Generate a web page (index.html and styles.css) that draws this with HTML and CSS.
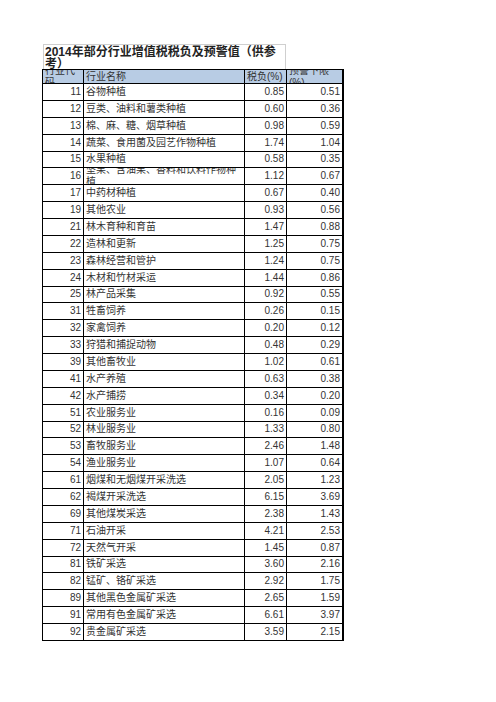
FILE: index.html
```html
<!DOCTYPE html>
<html lang="zh">
<head>
<meta charset="utf-8">
<title>2014年部分行业增值税税负及预警值</title>
<link rel="stylesheet" href="styles.css">
</head>
<body>
<div class="sheet">
  <div class="title">2014年部分行业增值税税负及预警值（供参<br>考）</div>
  <div class="grid">
    <div class="cell head">行业代码</div>
    <div class="cell head">行业名称</div>
    <div class="cell head">税负(%)</div>
    <div class="cell head last">预警下限(%)</div>

    <div class="cell num">11</div><div class="cell">谷物种植</div><div class="cell num">0.85</div><div class="cell num last">0.51</div>
    <div class="cell num">12</div><div class="cell">豆类、油料和薯类种植</div><div class="cell num">0.60</div><div class="cell num last">0.36</div>
    <div class="cell num">13</div><div class="cell">棉、麻、糖、烟草种植</div><div class="cell num">0.98</div><div class="cell num last">0.59</div>
    <div class="cell num">14</div><div class="cell">蔬菜、食用菌及园艺作物种植</div><div class="cell num">1.74</div><div class="cell num last">1.04</div>
    <div class="cell num">15</div><div class="cell">水果种植</div><div class="cell num">0.58</div><div class="cell num last">0.35</div>
    <div class="cell num">16</div><div class="cell">坚果、含油果、香料和饮料作物种植</div><div class="cell num">1.12</div><div class="cell num last">0.67</div>
    <div class="cell num">17</div><div class="cell">中药材种植</div><div class="cell num">0.67</div><div class="cell num last">0.40</div>
    <div class="cell num">19</div><div class="cell">其他农业</div><div class="cell num">0.93</div><div class="cell num last">0.56</div>
    <div class="cell num">21</div><div class="cell">林木育种和育苗</div><div class="cell num">1.47</div><div class="cell num last">0.88</div>
    <div class="cell num">22</div><div class="cell">造林和更新</div><div class="cell num">1.25</div><div class="cell num last">0.75</div>
    <div class="cell num">23</div><div class="cell">森林经营和管护</div><div class="cell num">1.24</div><div class="cell num last">0.75</div>
    <div class="cell num">24</div><div class="cell">木材和竹材采运</div><div class="cell num">1.44</div><div class="cell num last">0.86</div>
    <div class="cell num">25</div><div class="cell">林产品采集</div><div class="cell num">0.92</div><div class="cell num last">0.55</div>
    <div class="cell num">31</div><div class="cell">牲畜饲养</div><div class="cell num">0.26</div><div class="cell num last">0.15</div>
    <div class="cell num">32</div><div class="cell">家禽饲养</div><div class="cell num">0.20</div><div class="cell num last">0.12</div>
    <div class="cell num">33</div><div class="cell">狩猎和捕捉动物</div><div class="cell num">0.48</div><div class="cell num last">0.29</div>
    <div class="cell num">39</div><div class="cell">其他畜牧业</div><div class="cell num">1.02</div><div class="cell num last">0.61</div>
    <div class="cell num">41</div><div class="cell">水产养殖</div><div class="cell num">0.63</div><div class="cell num last">0.38</div>
    <div class="cell num">42</div><div class="cell">水产捕捞</div><div class="cell num">0.34</div><div class="cell num last">0.20</div>
    <div class="cell num">51</div><div class="cell">农业服务业</div><div class="cell num">0.16</div><div class="cell num last">0.09</div>
    <div class="cell num">52</div><div class="cell">林业服务业</div><div class="cell num">1.33</div><div class="cell num last">0.80</div>
    <div class="cell num">53</div><div class="cell">畜牧服务业</div><div class="cell num">2.46</div><div class="cell num last">1.48</div>
    <div class="cell num">54</div><div class="cell">渔业服务业</div><div class="cell num">1.07</div><div class="cell num last">0.64</div>
    <div class="cell num">61</div><div class="cell">烟煤和无烟煤开采洗选</div><div class="cell num">2.05</div><div class="cell num last">1.23</div>
    <div class="cell num">62</div><div class="cell">褐煤开采洗选</div><div class="cell num">6.15</div><div class="cell num last">3.69</div>
    <div class="cell num">69</div><div class="cell">其他煤炭采选</div><div class="cell num">2.38</div><div class="cell num last">1.43</div>
    <div class="cell num">71</div><div class="cell">石油开采</div><div class="cell num">4.21</div><div class="cell num last">2.53</div>
    <div class="cell num">72</div><div class="cell">天然气开采</div><div class="cell num">1.45</div><div class="cell num last">0.87</div>
    <div class="cell num">81</div><div class="cell">铁矿采选</div><div class="cell num">3.60</div><div class="cell num last">2.16</div>
    <div class="cell num">82</div><div class="cell">锰矿、铬矿采选</div><div class="cell num">2.92</div><div class="cell num last">1.75</div>
    <div class="cell num">89</div><div class="cell">其他黑色金属矿采选</div><div class="cell num">2.65</div><div class="cell num last">1.59</div>
    <div class="cell num">91</div><div class="cell">常用有色金属矿采选</div><div class="cell num">6.61</div><div class="cell num last">3.97</div>
    <div class="cell num">92</div><div class="cell">贵金属矿采选</div><div class="cell num">3.59</div><div class="cell num last">2.15</div>
  </div>
</div>
</body>
</html>
```

FILE: styles.css
```css
html, body {
  margin: 0;
  padding: 0;
  background: #ffffff;
}

body {
  font-family: "Liberation Sans", "Noto Sans CJK SC", sans-serif;
  color: #2a2a2a;
}

.sheet {
  padding: 44px 0 0 42px;
}

.title {
  box-sizing: border-box;
  width: 243px;
  height: 25px;
  margin-left: 1px;
  padding: 1px 1px 0 1px;
  border: 1px solid #cfcfcf;
  border-bottom: none;
  font-size: 12px;
  line-height: 12px;
  font-weight: bold;
  color: #222;
  overflow: hidden;
}

.grid {
  display: grid;
  grid-template-columns: 41px 161px 42px 57px;
  grid-template-rows: 14px;
  grid-auto-rows: 16.88px;
  width: max-content;
  border-left: 1px solid #000;
  border-top: 1px solid #000;
}

.cell {
  box-sizing: border-box;
  display: flex;
  align-items: center;
  overflow: hidden;
  padding: 0 2px;
  border-right: 1px solid #000;
  border-bottom: 1px solid #000;
  font-size: 10px;
  line-height: 12px;
  color: #333;
}

.cell.last {
  border-right-width: 2px;
}

.head {
  background: #b8cce4;
}

.num {
  justify-content: flex-end;
}
```
